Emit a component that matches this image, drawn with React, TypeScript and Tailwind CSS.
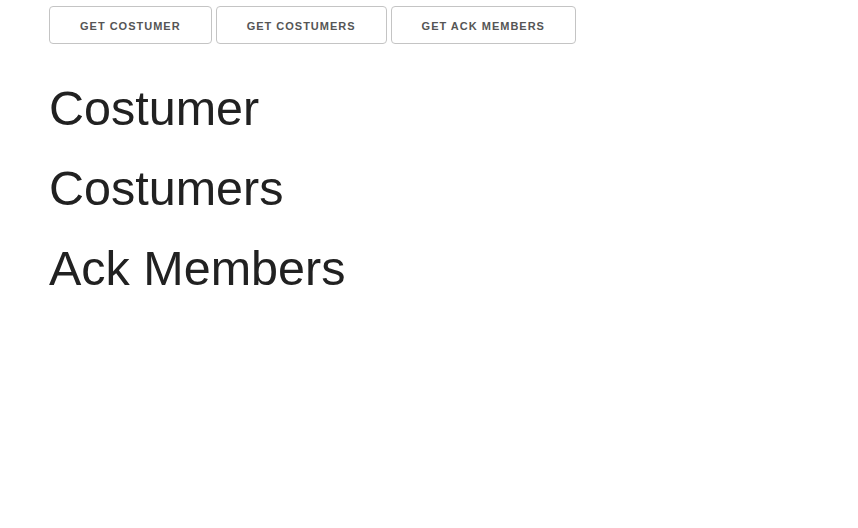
export default function App() {
    return (
        <div className="min-h-screen bg-white px-[49px] pt-[6px] font-['Liberation_Sans',Arial,sans-serif]">
            <div className="flex flex-row gap-[4px]">
                <Button label="GET COSTUMER" />
                <Button label="GET COSTUMERS" />
                <Button label="GET ACK MEMBERS" />
            </div>
            <div className="mt-[24px] flex flex-col text-[#212121]">
                <h1 className="text-[48.5px] leading-[80px]">Costumer</h1>
                <h1 className="text-[48.5px] leading-[80px]">Costumers</h1>
                <h1 className="text-[48.5px] leading-[80px]">Ack Members</h1>
            </div>
        </div>
    )
}

function Button({ label }: { label: string }) {
    return (
        <button className="h-[38px] rounded-[4px] border border-[#c4c4c4] bg-white px-[30px] pt-[2px] text-[11px] font-bold tracking-[1px] text-[#555555]">
            {label}
        </button>
    )
}
